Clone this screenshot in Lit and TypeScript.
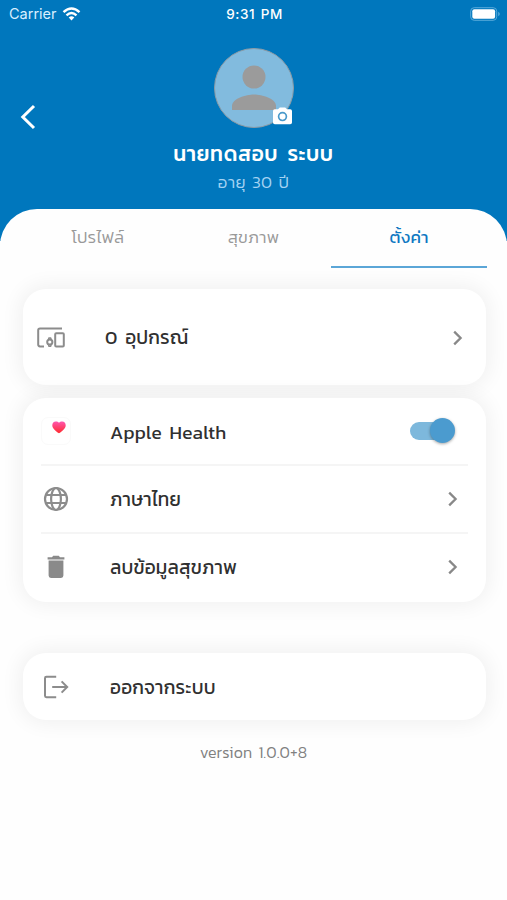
import { LitElement, html, css } from "lit";
import { customElement } from "lit/decorators.js";

const chevron = html`<svg class="chev" width="12" height="16" viewBox="0 0 12 16"><path d="M2.200 1.600 8.600 8l-6.400 6.400" fill="none" stroke="#888" stroke-width="2.300"/></svg>`;

const devices = html`<svg width="28" height="21" viewBox="0 0 28 21" fill="none" stroke="#8c8c8c" stroke-width="2">
  <path d="M25 1.400H3Q1.200 1.400 1.200 3.200V17.600Q1.200 19.400 3 19.400H7"/>
  <rect x="18.200" y="6.200" width="8.600" height="13.200" rx="1"/>
  <circle cx="12.800" cy="15" r="2.600"/>
  <path d="M11.500 12.200 12 10.900h1.600l.5 1.300M11.500 17.800l.5 1.500h1.600l.5-1.500" stroke-width="1.500"/></svg>`;

const globe = html`<svg width="26" height="26" viewBox="0 0 26 26" fill="none" stroke="#8c8c8c" stroke-width="2.200">
  <circle cx="13" cy="13" r="11"/><ellipse cx="13" cy="13" rx="4.900" ry="11"/><path d="M2.600 9h20.800M2.600 17h20.800"/></svg>`;

const trash = html`<svg width="18" height="24" viewBox="0 0 18 24" fill="#8a8a8a">
  <path d="M.6 2.200H5L6.200.8h5.600L13 2.200h4.400v2.200H.6zM1.600 5.500h14.800v15.100q0 2.400-2.400 2.400H4q-2.400 0-2.400-2.400z"/></svg>`;

const logout = html`<svg width="26" height="24" viewBox="0 0 26 24" fill="none" stroke="#8c8c8c" stroke-width="2">
  <path d="M13.200 1.800H3.400Q2 1.800 2 3.200V20.800Q2 22.200 3.400 22.200H13.200M9.200 12H24M18.600 6.400 24.200 12l-5.600 5.600"/></svg>`;

const heart = html`<span class="health"><svg width="14" height="13" viewBox="0 0 14 13">
  <defs><linearGradient id="g" x1="0" y1="0" x2="0" y2="1"><stop offset="0" stop-color="#ff57b0"/><stop offset="1" stop-color="#ff2a2c"/></linearGradient></defs>
  <path fill="url(#g)" d="M7 12.300C3.400 9.800.3 7.300.3 4.200.3 2 1.800.4 3.700.4 5.200.4 6.300.9 7 1.700 7.700.9 8.800.4 10.300.4c1.900 0 3.400 1.600 3.400 3.800 0 3.100-3.100 5.600-6.700 8.100z"/></svg></span>`;

@customElement("app-root")
export class AppRoot extends LitElement {
  static styles = css`
    :host { display: block; width: 507px; height: 900px; overflow: hidden; background: #fefefe;
      font-family: "Kanit", "Prompt", "Noto Sans Thai", "Noto Sans", sans-serif; font-weight: 300; color: #303030; }
    * { box-sizing: border-box; }
    svg { display: block; flex: none; }
    .header { height: 241px; background: #0077bd; color: #fff; }
    .status { height: 28px; display: grid; grid-template-columns: 1fr auto 1fr; align-items: center;
      padding: 0 7px 0 9px; font: 14.500px/28px Inter, sans-serif; }
    .carrier { display: flex; align-items: center; gap: 5px; color: #d9efff; }
    .time { font-weight: 500; font-size: 13.500px; letter-spacing: .55px; word-spacing: 1.500px; }
    .battery { justify-self: end; }
    .hero { display: grid; grid-template-columns: 60px 1fr 60px; height: 181px; padding-top: 20px; }
    .back { margin: 56px 0 0 20px; }
    .person { display: flex; flex-direction: column; align-items: center; }
    .avatar { position: relative; width: 80px; height: 80px; border-radius: 50%; background: #82bbde; border: 1px solid #8d9ba5; }
    .cam { position: absolute; left: 58px; top: 58px; }
    .name { margin-top: 12px; font-size: 21px; line-height: 28px; font-weight: 500; letter-spacing: .600px; word-spacing: 4px; white-space: nowrap; }
    .age { font-size: 17px; line-height: 28px; letter-spacing: .3px; word-spacing: 2px; color: #a5d3f3; white-space: nowrap; }
    .sheet { margin-top: -32px; background: #fefefe; border-radius: 37px 37px 0 0; padding: 0 20px; height: 691px; }
    .tabs { display: grid; grid-template-columns: repeat(3, 1fr); height: 59px; }
    .tab { text-align: center; font-size: 17px; line-height: 56px; letter-spacing: .2px; color: #999; border-bottom: 2px solid transparent; }
    .tab.on { color: #0f78c2; font-weight: 400; border-color: #5ba6d7; }
    .card { width: 463px; margin-left: 3px; background: #fff; border-radius: 23px; box-shadow: 0 0 20px 4px rgba(0,0,0,.055);
      padding: 0 18px; }
    .devices { margin-top: 21px; height: 96px; }
    .group { margin-top: 13px; height: 204px; }
    .exit { margin-top: 51px; height: 67px; }
    .row { display: grid; grid-template-columns: 30px 1fr auto; column-gap: 39px; align-items: center; height: 68px; font-size: 19px; font-weight: 400; letter-spacing: .200px; word-spacing: 3px; white-space: nowrap; }
    .devices .row { height: 97px; margin: 0 -5px 0 -5px; }
    .group .row:first-child { height: 66px; }
    .group .row:first-child .label { padding-top: 2px; }
    .group .row + .row { border-top: 2px solid #f5f5f5; }
    .icon { display: grid; justify-items: center; }
    .chev { margin-right: 9px; }
    .health { width: 30px; height: 28px; border: 1px solid #fafafa; border-radius: 7px; display: flex; justify-content: center; padding: 3px 0 0 6px; }
    .switch { position: relative; width: 45px; height: 26px; margin-right: 13px; display: flex; align-items: center; }
    .track { width: 42px; height: 18px; border-radius: 9px; background: #7db8dc; }
    .knob { position: absolute; right: 0; top: 0; width: 25px; height: 25px; border-radius: 50%; background: #4b9bcf; box-shadow: 0 1px 3px rgba(0,0,0,.35); }
    .version { text-align: center; font-size: 16px; line-height: 24px; letter-spacing: .1px; word-spacing: 2.500px; margin-top: 20px; color: #808080; }
  `;

  row(icon: unknown, label: string, end: unknown) {
    return html`<div class="row"><span class="icon">${icon}</span><span class="label">${label}</span>${end}</div>`;
  }

  render() {
    return html`
      <header class="header">
        <div class="status">
          <span class="carrier">Carrier
            <svg width="19" height="14" viewBox="0 0 18 14" fill="none" stroke="#fff" stroke-width="2.400"><path d="M1 5.200Q9-2.200 17 5.200M4 8.300Q9 3.800 14 8.300"/><path d="M6.200 10.500Q9 8.200 11.800 10.500L9 13.500z" fill="#fff" stroke="none"/></svg></span>
          <span class="time">9:31 PM</span>
          <svg class="battery" width="30" height="14" viewBox="0 0 30 14"><rect x=".7" y=".7" width="26" height="12.600" rx="3.500" fill="none" stroke="#58aada"/><rect x="2.300" y="2.300" width="22.800" height="9.400" rx="2" fill="#fff"/><path d="M28.200 4.800q1.600.7 1.600 2.200t-1.600 2.200z" fill="#58aada"/></svg>
        </div>
        <div class="hero">
          <svg class="back" width="16" height="26" viewBox="0 0 16 26"><path d="M14 2 2.800 13 14 24" fill="none" stroke="#fff" stroke-width="3"/></svg>
          <div class="person">
            <div class="avatar">
              <svg width="78" height="78" viewBox="0 0 78 78" fill="#9b9b9b"><circle cx="39" cy="28" r="11.500"/><path d="M17 61v-4c0-7.500 14-11.500 22-11.500s22 4 22 11.500v4z"/></svg>
              <svg class="cam" width="19" height="18" viewBox="0 0 19 18"><path d="M1.800 2.200H5L6.800.4h5.400L14 2.200h3.200q1.800 0 1.800 1.800v11.400q0 1.800-1.800 1.800H1.800Q0 17.200 0 15.400V4q0-1.800 1.800-1.800z" fill="#fff"/><circle cx="9.500" cy="9.600" r="3.900" fill="#fff" stroke="#4a9acb" stroke-width="1.700"/></svg>
            </div>
            <div class="name">นายทดสอบ ระบบ</div>
            <div class="age">อายุ 30 ปี</div>
          </div>
        </div>
      </header>
      <main class="sheet">
        <nav class="tabs"><span class="tab">โปรไฟล์</span><span class="tab">สุขภาพ</span><span class="tab on">ตั้งค่า</span></nav>
        <section class="card devices">${this.row(devices, "0 อุปกรณ์", chevron)}</section>
        <section class="card group">
          ${this.row(heart, "Apple Health", html`<span class="switch"><i class="track"></i><i class="knob"></i></span>`)}
          ${this.row(globe, "ภาษาไทย", chevron)}
          ${this.row(trash, "ลบข้อมูลสุขภาพ", chevron)}
        </section>
        <section class="card exit">${this.row(logout, "ออกจากระบบ", "")}</section>
        <div class="version">version 1.0.0+8</div>
      </main>`;
  }
}
